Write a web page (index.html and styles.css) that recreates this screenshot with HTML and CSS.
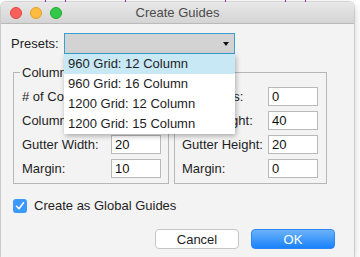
FILE: index.html
```html
<!DOCTYPE html>
<html lang="en">
<head>
    <meta charset="UTF-8">
    <meta name="viewport" content="width=device-width, initial-scale=1.0">
    <title>Create Guides</title>
    <link rel="stylesheet" href="styles.css">
</head>
<body>
    <div class="guides"></div>
    <div class="window">
        <div class="titlebar">
            <div class="lights">
                <span class="light red"></span>
                <span class="light yellow"></span>
                <span class="light green"></span>
            </div>
            <div class="title">Create Guides</div>
        </div>
        <div class="content">
            <div class="presets">
                <label class="presets-label">Presets:</label>
                <div class="select">
                    <span class="arrow"></span>
                    <ul class="menu">
                        <li class="active">960 Grid: 12 Column</li>
                        <li>960 Grid: 16 Column</li>
                        <li>1200 Grid: 12 Column</li>
                        <li>1200 Grid: 15 Column</li>
                    </ul>
                </div>
            </div>
            <div class="groups">
                <fieldset class="group left">
                    <legend>Columns</legend>
                    <div class="row"><label># of Columns:</label><input type="text" value="12"></div>
                    <div class="row"><label>Column Width:</label><input type="text" value="60"></div>
                    <div class="row"><label>Gutter Width:</label><input type="text" value="20"></div>
                    <div class="row"><label>Margin:</label><input type="text" value="10"></div>
                </fieldset>
                <fieldset class="group right">
                    <legend>Rows</legend>
                    <div class="row"><label># of Rows:</label><input type="text" value="0"></div>
                    <div class="row"><label>Row Height:</label><input type="text" value="40"></div>
                    <div class="row"><label>Gutter Height:</label><input type="text" value="20"></div>
                    <div class="row"><label>Margin:</label><input type="text" value="0"></div>
                </fieldset>
            </div>
            <label class="check">
                <span class="box">
                    <svg width="14" height="14" viewBox="0 0 14 14">
                        <path d="M3.5 7.3 L6 9.8 L10.5 3.8" fill="none" stroke="#fff" stroke-width="1.6" stroke-linecap="round" stroke-linejoin="round"/>
                    </svg>
                </span>
                Create as Global Guides
            </label>
            <div class="buttons">
                <button class="btn">Cancel</button>
                <button class="btn primary">OK</button>
            </div>
        </div>
    </div>
</body>
</html>
```

FILE: styles.css
```css
body {
    margin: 0;
    background: #fff;
    font-family: "Liberation Sans", Arial, sans-serif;
    font-size: 13px;
    color: #1e1e1e;
    overflow: hidden;
}

/* Magenta guide ticks peeking above the dialog */
.guides {
    position: absolute;
    top: 0;
    left: 45px;
    width: 1px;
    height: 3px;
    background: #c51fc5;
    box-shadow:
        20px 0 #c51fc5, 80px 0 #c51fc5, 180px 0 #c51fc5,
        240px 0 #c51fc5, 260px 0 #c51fc5;
}

.window {
    position: relative;
    margin: 2px 0 0 1px;
    width: 353px;
    height: 255px;
    background: #f3f3f3;
    border-radius: 5px 5px 0 0;
    box-shadow: 0 0 0 1px rgba(0, 0, 0, 0.12), 0 3px 10px rgba(0, 0, 0, 0.22);
}

.titlebar {
    display: grid;
    align-items: center;
    height: 21px;
    background: linear-gradient(#e9e8e9, #d4d4d4);
    border-bottom: 1px solid #b9b9b9;
    border-radius: 5px 5px 0 0;
}

.lights, .title {
    grid-area: 1 / 1;
}

.lights {
    display: flex;
    gap: 8px;
    padding-left: 9px;
}

.light {
    width: 12px;
    height: 12px;
    border-radius: 50%;
    box-sizing: border-box;
}

.red { background: #fc605c; border: 1px solid #e0443e; }
.yellow { background: #fdbc40; border: 1px solid #dea123; }
.green { background: #34c84a; border: 1px solid #1aab29; }

.title {
    text-align: center;
    color: #4b4b4b;
    font-size: 13px;
}

.content {
    padding: 9px 0 0 12px;
}

.presets {
    display: flex;
    margin-left: -2px;
    height: 21px;
    line-height: 21px;
}

.presets-label {
    width: 53px;
}

.select {
    position: relative;
    width: 171px;
    box-sizing: border-box;
    border: 1px solid #3c9fd2;
    background: #d3d3d3;
}

.arrow {
    position: absolute;
    right: 5px;
    top: 8px;
    width: 0;
    height: 0;
    border-left: 3.5px solid transparent;
    border-right: 3.5px solid transparent;
    border-top: 4px solid #111;
}

.menu {
    position: absolute;
    top: calc(100% + 1px);
    left: -1px;
    z-index: 2;
    width: 171px;
    margin: 0;
    padding: 0;
    list-style: none;
    background: #fff;
    box-shadow: 1px 2px 5px rgba(0, 0, 0, 0.3);
}

.menu li {
    height: 20px;
    line-height: 20px;
    padding-left: 4px;
}

.menu li.active {
    background: #c8e8f6;
}

.groups {
    display: grid;
    grid-template-columns: 156px 153px;
    gap: 5px;
    margin-top: 11px;
}

.group {
    margin: 0;
    border: 1px solid #b7b7b7;
    display: flex;
    flex-direction: column;
    gap: 5px;
    min-width: 0;
}

.group.left { padding: 7px 7px 5px 8px; }
.group.right { padding: 7px 8px 5px 7px; }

.group legend {
    padding: 0 2px;
    margin-left: -2px;
    line-height: 15px;
}

.row {
    display: flex;
    justify-content: space-between;
    align-items: center;
    height: 19px;
}

.row label {
    white-space: nowrap;
}

.row input {
    width: 50px;
    height: 19px;
    box-sizing: border-box;
    margin: 0;
    border: 1px solid #b9b9b9;
    padding: 0 3px;
    font: inherit;
    color: #111;
    background: #fff;
}

.check {
    display: flex;
    align-items: center;
    margin-top: 14px;
    height: 15px;
}

.box {
    width: 14px;
    height: 14px;
    border-radius: 3px;
    background: #3b99fc;
    margin-right: 7px;
}

.box svg {
    display: block;
}

.buttons {
    display: flex;
    justify-content: flex-end;
    gap: 12px;
    margin-top: 16px;
    padding-right: 19px;
}

.btn {
    width: 84px;
    height: 20px;
    padding: 0;
    font: inherit;
    border-radius: 4px;
    border: 1px solid #c6c6c6;
    background: #fff;
    color: #1e1e1e;
}

.btn.primary {
    border: 1px solid #2c86f5;
    background: linear-gradient(#6cb3fa, #1b82fb);
    color: #fff;
}
```
